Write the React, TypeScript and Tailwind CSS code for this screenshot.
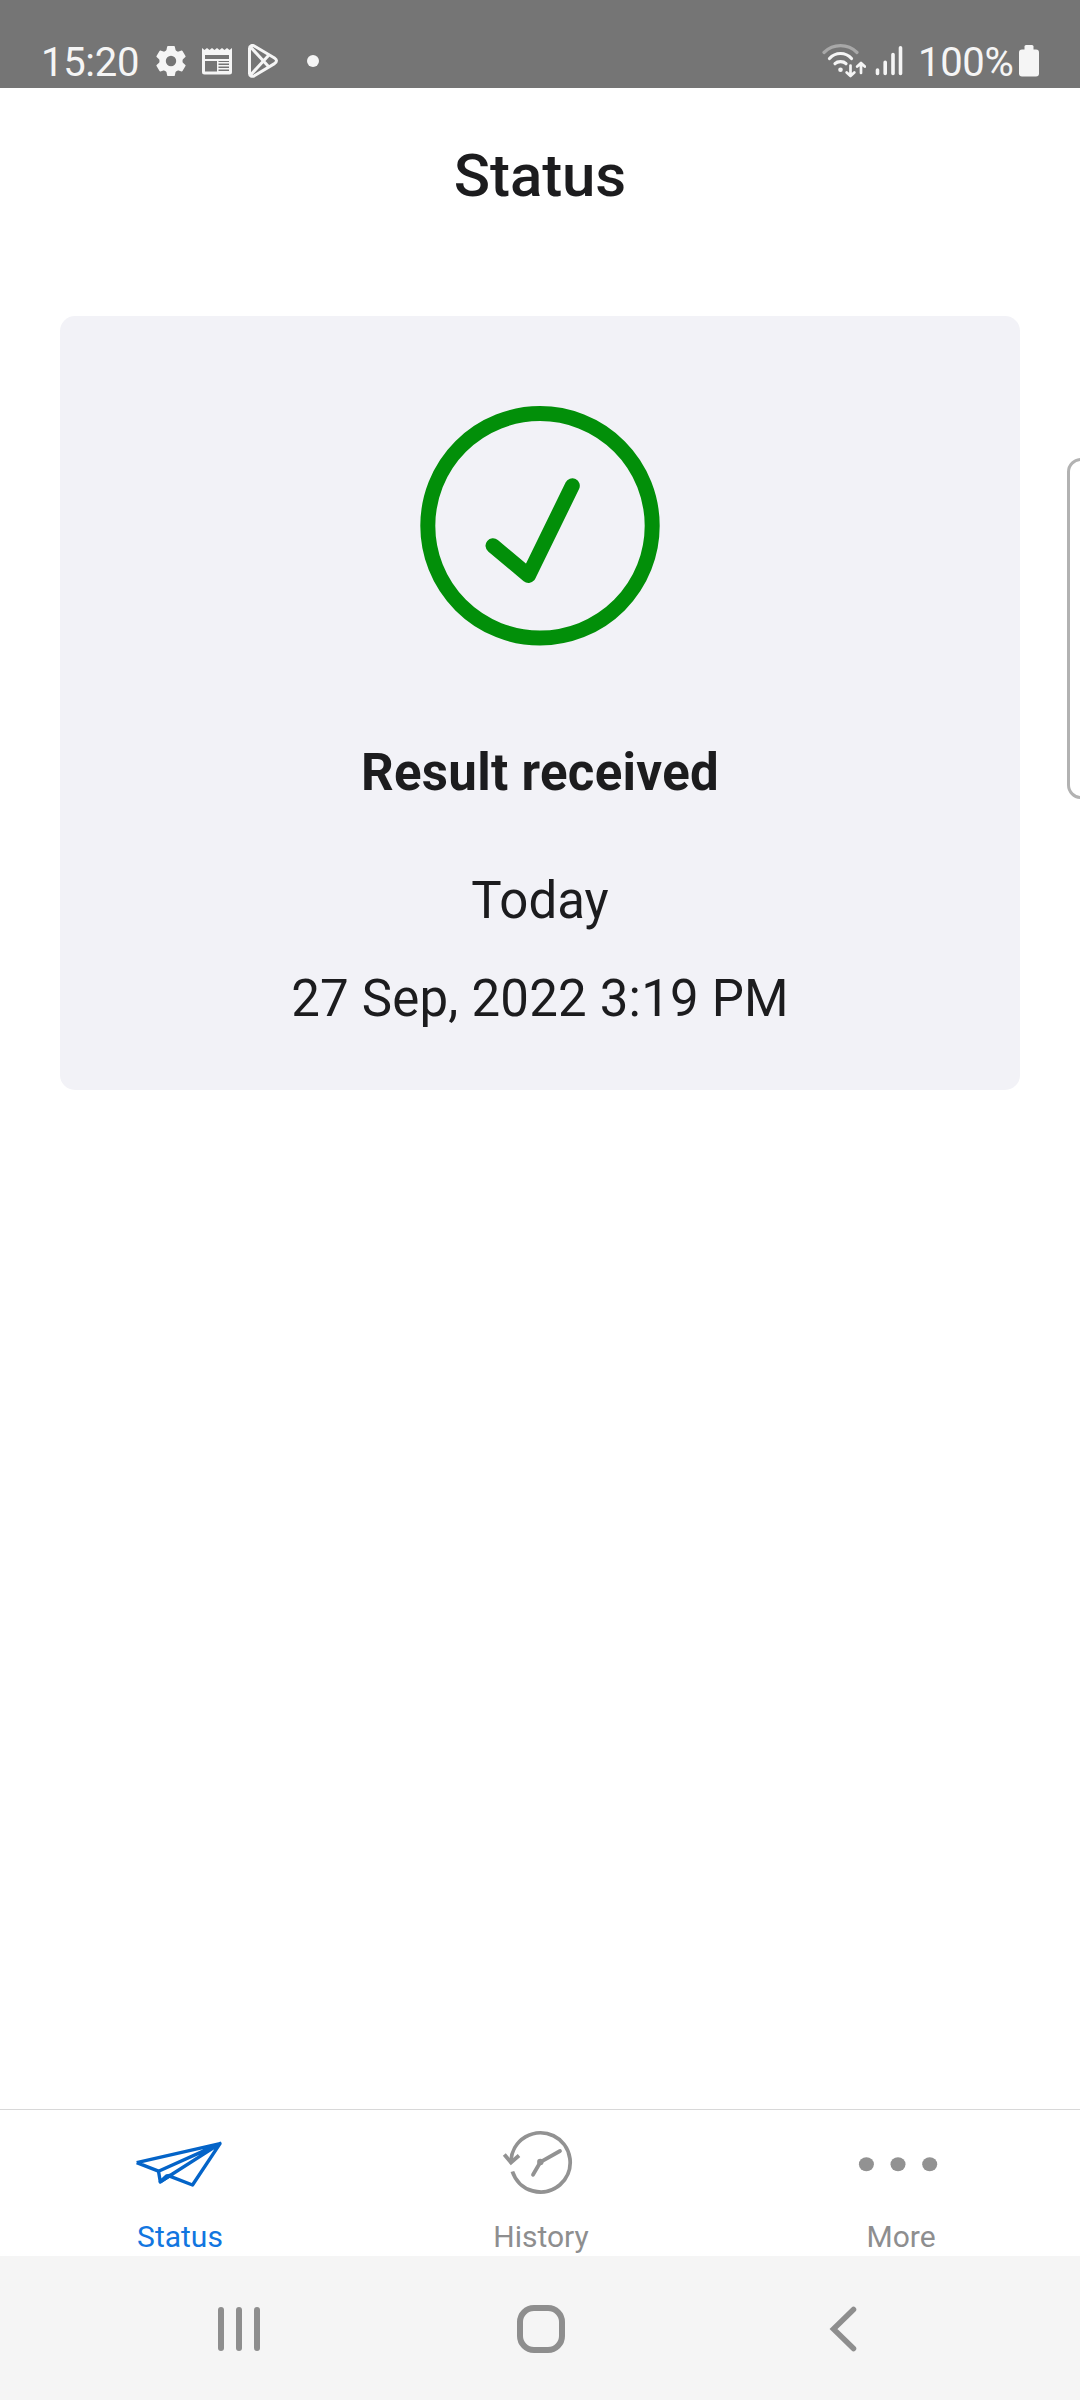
import type { ReactNode } from "react";

const StatusBar = () => {
  return (
    <div className="flex h-[88px] items-start bg-[#757575] text-[#f5f5f5]">
      <span className="ml-[41px] mt-[39px] w-[101px] text-[40px] leading-[48px] tracking-[-0.3px]">15:20</span>

      {/* Settings */}
      <svg className="ml-[14px] mt-[46px]" width="30" height="30" viewBox="0 0 30 30" fill="currentColor">
        <circle cx="15" cy="15" r="8.4" fill="none" stroke="currentColor" strokeWidth="6.4" />
        {[0, 60, 120, 180, 240, 300].map((angle) => (
          <path key={angle} transform={`rotate(${angle} 15 15)`} d="M10 6L11.2 .6Q11.300 0 12 0H18Q18.700 0 18.800 .6L20 6z" />
        ))}
      </svg>

      {/* Calendar */}
      <svg className="ml-[16px] mt-[46px]" width="30" height="30" viewBox="0 0 30 30" fill="none">
        <path
          fill="currentColor"
          fillRule="evenodd"
          d="M0 2l2.5 2L5 2l2.5 2L10 2l2.5 2L15 2l2.5 2L20 2l2.5 2L25 2l2.5 2L30 2v24a2.5 2.5 0 0 1-2.5 2.5h-25A2.5 2.5 0 0 1 0 26zM3 9v4h24V9zM3 15v10.5h12V15zM16.5 15v1H27v-1zM16.5 17.5v1.5H27v-1.5zM16.5 20.5V22H27v-1.5zM16.5 23.5V25H27v-1.5z"
        />
      </svg>

      {/* Play store */}
      <svg
        className="ml-[16px] mt-[44px]"
        width="30"
        height="34"
        viewBox="0 0 30 34"
        fill="none"
        stroke="currentColor"
        strokeWidth="3"
        strokeLinejoin="round"
      >
        <path d="M1.5 4.5C1.5 1.8 4 .7 6.3 2L26.5 14q4 2.8 0 5.6L6.3 31.8C4 33 1.5 32 1.5 29.5z" />
        <path d="M2.5 3l18 19.5M2.5 31l18-19.5" />
      </svg>

      <span className="ml-[29px] mt-[55px] size-3 rounded-full bg-[#f5f5f5]" />

      <div className="ml-auto mr-[41px] flex items-start">
        {/* Wifi with up/down arrows */}
        <svg
          className="mt-[43px]"
          width="44"
          height="36"
          viewBox="0 0 44 36"
          fill="none"
          stroke="currentColor"
          strokeWidth="3.2"
          strokeLinecap="round"
          strokeLinejoin="round"
        >
          <path opacity=".4" d="M2 9.5Q9 2.7 18.5 2.7T35 9.5" />
          <path d="M7.5 15.5Q12 10.5 18.5 10.5T29.5 15.5" />
          <path d="M13 20.7Q15 18.7 18.5 18.7T24 20.7" />
          <circle cx="18.5" cy="26.7" r="2.3" fill="currentColor" stroke="none" />
          <path strokeWidth="2.7" d="M28.5 22.5v10M24.700 29.5l3.8 3.5 3.8-3.5M39 30V20.5M35.200 23.5l3.8-3.5 3.8 3.5" />
        </svg>
        {/* Signal */}
        <svg
          className="ml-[9px] mt-[45px]"
          width="28"
          height="32"
          viewBox="0 0 28 32"
          stroke="currentColor"
          strokeWidth="3.6"
          strokeLinecap="round"
        >
          <path d="M2.500 25v3.5M10.200 17.3v11.2M18 9.5v19M25.500 2.7v25.8" />
        </svg>
        <span className="ml-[15px] mt-[39px] w-[98px] text-[40px] leading-[48px] tracking-[-0.3px]">100%</span>
        {/* Battery */}
        <svg className="ml-[3px] mt-[45px]" width="20" height="32" viewBox="0 0 20 32" fill="currentColor">
          <rect x="5.5" y="0" width="9" height="8" rx="1.5" />
          <rect x="0" y="4.5" width="20" height="27" rx="3" />
        </svg>
      </div>
    </div>
  );
};

const CheckIcon = () => (
  <svg width="240" height="240" viewBox="0 0 240 240" fill="none" stroke="#028f09" strokeWidth="15">
    <circle cx="120" cy="119.8" r="112.2" />
    <path strokeLinecap="round" strokeLinejoin="round" d="M73 139.7L108.5 169.5L152.3 79.8" />
  </svg>
);

const PlaneIcon = () => (
  <svg width="90" height="64" viewBox="0 0 90 64" fill="none" stroke="#0464c8" strokeWidth="3.4" strokeLinejoin="round">
    <path d="M1.7 32.6L85 13.6L57.5 55L34 45.8M1.7 32.6L23.5 41.2L85 13.6L25.3 51.8L23.5 41.2" />
    <path d="M25.3 51.8L35 45.5L31.5 46z" fill="#0464c8" />
  </svg>
);

const HistoryIcon = () => (
  <svg width="90" height="64" viewBox="0 0 90 64" fill="none" stroke="#929292" strokeWidth="3.8">
    <path d="M16 31A29.6 29.6 0 1 1 17.4 41.5" />
    <path d="M9.3 24.5l6.7 8 8-7" />
    <path strokeLinecap="round" d="M65 21L45.3 32.2L38 44.8" />
    <circle cx="45.3" cy="32" r="3.2" fill="#929292" stroke="none" />
  </svg>
);

const MoreIcon = () => (
  <svg width="90" height="64" viewBox="0 0 90 64" fill="#929292">
    <ellipse cx="11.4" cy="34.2" rx="7.5" ry="7" />
    <ellipse cx="43" cy="34.2" rx="7.5" ry="7" />
    <ellipse cx="74.7" cy="34.2" rx="7.5" ry="7" />
  </svg>
);

type TabProps = { icon: ReactNode; label: string; active?: boolean };

const Tab = ({ icon, label, active }: TabProps) => (
  <button className="flex flex-col items-center pt-[20px]">
    {icon}
    <span
      className={
        active
          ? "mt-[25px] text-[30px] leading-[36px] text-[#1276e0]"
          : "mt-[25px] pl-[2px] text-[30px] leading-[36px] text-[#8e8e8f]"
      }
    >
      {label}
    </span>
  </button>
);

const App = () => {
  return (
    <div className="relative flex h-[2400px] w-[1080px] flex-col overflow-hidden bg-white font-['Roboto',sans-serif] text-[#1c1c1e]">
      <StatusBar />

      {/* Header */}
      <h1 className="flex h-[175px] items-center justify-center text-[60px] font-medium tracking-[-0.1px]">Status</h1>

      {/* Result card */}
      <main className="mx-[60px] mt-[53px] flex h-[774px] flex-col items-center rounded-[15px] bg-[#f2f2f7] pt-[90px] text-[51px] leading-[60px]">
        <CheckIcon />
        <h2 className="mt-[97px] font-bold tracking-[0.3px]">Result received</h2>
        <p className="mt-[68px]">Today</p>
        <p className="mt-[38px] tracking-[0.2px]">27 Sep, 2022 3:19 PM</p>
      </main>

      {/* Edge panel handle */}
      <div className="absolute left-[1067px] top-[458px] h-[341px] w-[30px] rounded-[14px] border-[3px] border-[#b2b2b2]" />

      {/* Tabs */}
      <nav className="mt-auto grid h-[147px] grid-cols-3 border-t border-[#d8d8d8]">
        <Tab icon={<PlaneIcon />} label="Status" active />
        <Tab icon={<HistoryIcon />} label="History" />
        <Tab icon={<MoreIcon />} label="More" />
      </nav>

      {/* System navigation */}
      <div className="flex h-[144px] justify-between bg-[#f5f5f5] pl-[218px] pr-[223px] pt-[49px]">
        <div className="mt-[2px] flex h-[44px] w-[42px] justify-between">
          <span className="w-[6px] rounded-full bg-[#8e8e8e]" />
          <span className="w-[6px] rounded-full bg-[#8e8e8e]" />
          <span className="w-[6px] rounded-full bg-[#8e8e8e]" />
        </div>
        <div className="ml-[-7px] size-[48px] rounded-[17px] border-[6px] border-[#8e8e8e]" />
        <svg className="mt-[1px]" width="28" height="46" viewBox="0 0 28 46" fill="none" stroke="#8e8e8e" strokeWidth="5.5" strokeLinecap="round">
          <path d="M24.5 3.5L4.5 23L24.5 42.5" />
        </svg>
      </div>
    </div>
  );
};

export default App;
